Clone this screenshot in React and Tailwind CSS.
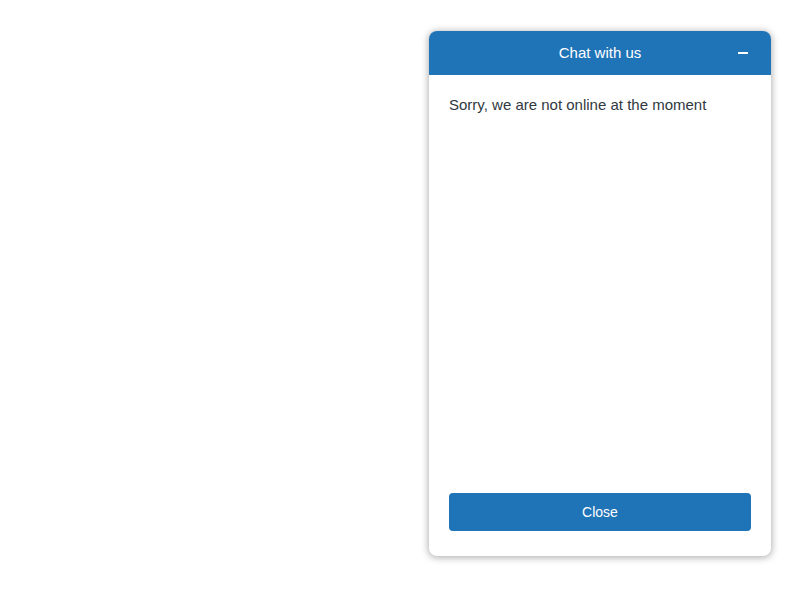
export default function App() {
  return (
    <main className="flex min-h-screen justify-end bg-white pt-[31px] pr-[29px] pb-11 pl-4 font-['Liberation_Sans',Arial,sans-serif]">
      <section
        aria-labelledby="chat-title"
        className="flex w-full max-w-[342px] flex-col overflow-hidden rounded-lg bg-white shadow-[0_1px_7px_1px_rgba(0,0,0,0.3)]"
      >
        <header className="grid h-11 grid-cols-[1fr_auto_1fr] items-center bg-[#1f73b7] px-4 text-white">
          <h1 id="chat-title" className="col-start-2 text-[15px] leading-5">
            Chat with us
          </h1>
          <button
            type="button"
            aria-label="Minimize chat"
            className="flex size-6 items-center justify-center justify-self-end"
          >
            <svg width="16" height="16" viewBox="0 0 16 16" fill="none" aria-hidden="true">
              <path d="M4 8h8" stroke="currentColor" strokeWidth="2" strokeLinecap="square" />
            </svg>
          </button>
        </header>
        <div className="flex flex-1 flex-col justify-between px-5 pt-5 pb-[25px]">
          <p className="text-[15px] leading-5 text-[#2f3941]">
            Sorry, we are not online at the moment
          </p>
          <button type="button" className="h-[38px] w-full rounded bg-[#1f73b7] text-sm text-white">
            Close
          </button>
        </div>
      </section>
    </main>
  );
}
